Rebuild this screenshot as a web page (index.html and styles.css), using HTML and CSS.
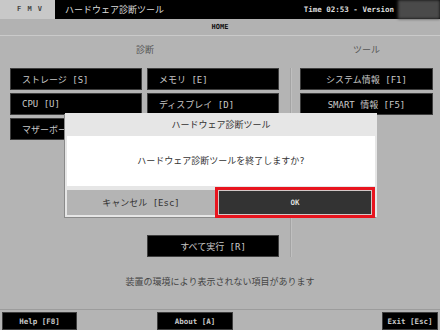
FILE: index.html
```html
<!DOCTYPE html>
<html lang="ja">
<head>
    <meta charset="UTF-8">
    <title>ハードウェア診断ツール</title>
    <link rel="stylesheet" href="styles.css">
</head>
<body>
    <header class="topbar">
        <div class="brand">F M V</div>
        <div class="appbar">
            <span class="app-title">ハードウェア診断ツール</span>
            <span class="clock">Time 02:53 - Version</span>
            <span class="version"></span>
        </div>
    </header>
    <nav class="crumb">HOME</nav>

    <main class="home">
        <section class="diag">
            <h2>診断</h2>
            <div class="diag-grid">
                <button class="btn">ストレージ [S]</button>
                <button class="btn">メモリ [E]</button>
                <button class="btn">CPU [U]</button>
                <button class="btn">ディスプレイ [D]</button>
                <button class="btn">マザーボード [M]</button>
            </div>
            <button class="btn center run">すべて実行 [R]</button>
        </section>
        <div class="divider"></div>
        <section class="tools">
            <h2>ツール</h2>
            <div class="tools-list">
                <button class="btn center">システム情報 [F1]</button>
                <button class="btn center">SMART 情報 [F5]</button>
            </div>
        </section>
    </main>

    <p class="note">装置の環境により表示されない項目があります</p>

    <footer class="bottombar">
        <button class="btn center help">Help [F8]</button>
        <button class="btn center about">About [A]</button>
        <button class="btn center exit">Exit [Esc]</button>
    </footer>

    <!-- confirm dialog -->
    <div class="dialog">
        <div class="dialog-title">ハードウェア診断ツール</div>
        <div class="dialog-body">ハードウェア診断ツールを終了しますか?</div>
        <div class="dialog-actions">
            <button class="dlg-btn cancel">キャンセル [Esc]</button>
            <button class="dlg-btn ok">OK</button>
        </div>
    </div>
</body>
</html>
```

FILE: styles.css
```css
body {
    margin: 0;
    width: 440px;
    height: 330px;
    background: #b4b4b4;
    font-family: "DejaVu Sans Mono", "Noto Sans CJK JP", monospace;
    font-size: 9px;
    color: #333;
    display: flex;
    flex-direction: column;
    position: relative;
    overflow: hidden;
}
.topbar {
    display: flex;
    height: 19px;
}
.brand {
    width: 55px;
    background: #c8c8c8;
    color: #444;
    font-weight: bold;
    font-size: 7px;
    line-height: 19px;
    padding-left: 17px;
    box-sizing: border-box;
    letter-spacing: 1px;
}
.appbar {
    flex: 1;
    display: flex;
    align-items: center;
    background: #000;
    color: #ddd;
}
.app-title {
    padding-left: 10px;
    flex: 1;
}
.clock {
    font-size: 7.5px;
    font-weight: bold;
    margin-right: 4px;
}
.version {
    width: 42px;
    height: 19px;
    background: #4a4a4a;
    filter: blur(1.5px);
}
.crumb {
    height: 16px;
    line-height: 16px;
    text-align: center;
    font-size: 7px;
    font-weight: bold;
    color: #111;
    background: #b2b2b2;
    border-bottom: 1px solid #cacaca;
}
.home {
    display: flex;
    height: 227px;
    padding-left: 10px;
}
h2 {
    margin: 0;
    height: 32px;
    padding-top: 8px;
    box-sizing: border-box;
    font-size: 9px;
    line-height: 12px;
    font-weight: normal;
    text-align: center;
    color: #555;
}
.diag {
    width: 270px;
}
.diag-grid {
    display: grid;
    grid-template-columns: 132px 132px;
    grid-auto-rows: 22px;
    column-gap: 5px;
    row-gap: 3px;
}
.btn {
    background: #000;
    color: #c8c8c8;
    border: 1px solid #3e3e3e;
    font-family: inherit;
    font-size: 9px;
    text-align: left;
    padding: 0 0 0 11px;
    margin: 0;
}
.btn.center {
    text-align: center;
    padding: 0;
}
.run {
    display: block;
    width: 132px;
    height: 22px;
    margin: 95px 0 0 137px;
}
.divider {
    width: 1px;
    height: 189px;
    margin: 32px 0 0 10px;
    background: #a4a4a4;
    box-shadow: 1px 0 0 #c0c0c0;
}
.tools {
    width: 133px;
    margin-left: 9px;
}
.tools-list {
    display: grid;
    grid-auto-rows: 22px;
    row-gap: 3px;
}
.note {
    margin: 0;
    padding-top: 13px;
    line-height: 12px;
    text-align: center;
    color: #444;
}
.bottombar {
    margin-top: auto;
    height: 18px;
    padding-top: 2px;
    border-top: 1px solid #9c9c9c;
    display: flex;
}
.bottombar .btn {
    font-size: 7.5px;
    font-weight: bold;
}
.help {
    width: 75px;
    margin-left: 2px;
}
.about {
    width: 76px;
    margin-left: 80px;
}
.exit {
    width: 56px;
    margin-left: auto;
    margin-right: 2px;
}
.dialog {
    position: absolute;
    left: 65px;
    top: 113px;
    width: 312px;
    background: #e6e6e6;
    border: 2px solid #e6e6e6;
    box-shadow: -1px 1px 0 #8a8a8a;
    box-sizing: border-box;
}
.dialog-title {
    height: 21px;
    line-height: 21px;
    text-align: center;
}
.dialog-body {
    height: 50px;
    line-height: 50px;
    background: #fff;
    text-align: center;
    margin-bottom: 4px;
}
.dialog-actions {
    display: flex;
    align-items: center;
    height: 25px;
}
.dlg-btn {
    font-family: inherit;
    font-size: 9px;
    margin: 0;
    padding: 0;
    border: 0;
}
.cancel {
    width: 150px;
    height: 25px;
    background: #b4b4b4;
    color: #333;
}
.ok {
    flex: none;
    width: 160px;
    height: 31px;
    background: #333;
    color: #ddd;
    font-weight: bold;
    font-size: 7.5px;
    border: 3px solid #e8141e;
    box-shadow: inset 0 0 0 1px #d4c8c8;
}
```
